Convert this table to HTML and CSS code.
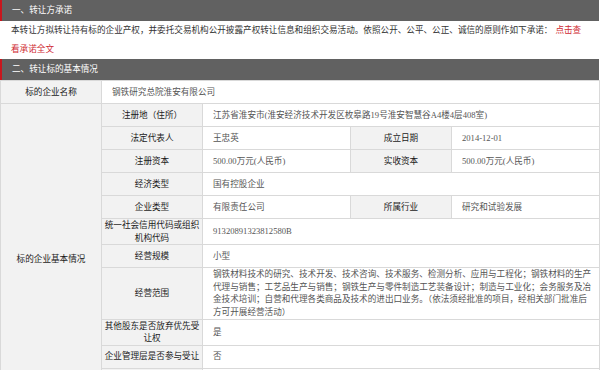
FILE: index.html
```html
<!DOCTYPE html>
<html lang="zh-CN">
<head>
<meta charset="utf-8">
<title>转让标的</title>
<link rel="stylesheet" href="styles.css">
</head>
<body>
<div class="page">
  <div class="sec-title">一、转让方承诺</div>
  <p class="promise">本转让方拟转让持有标的企业产权，并委托交易机构公开披露产权转让信息和组织交易活动。依照公开、公平、公正、诚信的原则作如下承诺：<a class="link" href="#">点击查看承诺全文</a></p>
  <div class="sec-title">二、转让标的基本情况</div>
  <table class="info">
    <colgroup>
      <col class="c1"><col class="c2"><col class="c3"><col class="c4"><col class="c5">
    </colgroup>
    <tbody>
      <tr>
        <th class="lbl">标的企业名称</th>
        <td class="val" colspan="4">钢铁研究总院淮安有限公司</td>
      </tr>
      <tr>
        <th class="lbl" rowspan="13">标的企业基本情况</th>
        <th class="lbl">注册地（住所）</th>
        <td class="val" colspan="3">江苏省淮安市(淮安经济技术开发区枚皋路19号淮安智慧谷A4楼4层408室)</td>
      </tr>
      <tr>
        <th class="lbl">法定代表人</th>
        <td class="val">王忠英</td>
        <th class="lbl">成立日期</th>
        <td class="val">2014-12-01</td>
      </tr>
      <tr>
        <th class="lbl">注册资本</th>
        <td class="val">500.00万元(人民币)</td>
        <th class="lbl">实收资本</th>
        <td class="val">500.00万元(人民币)</td>
      </tr>
      <tr>
        <th class="lbl">经济类型</th>
        <td class="val" colspan="3">国有控股企业</td>
      </tr>
      <tr>
        <th class="lbl">企业类型</th>
        <td class="val">有限责任公司</td>
        <th class="lbl">所属行业</th>
        <td class="val">研究和试验发展</td>
      </tr>
      <tr>
        <th class="lbl">统一社会信用代码或组织机构代码</th>
        <td class="val" colspan="3">91320891323812580B</td>
      </tr>
      <tr>
        <th class="lbl">经营规模</th>
        <td class="val" colspan="3">小型</td>
      </tr>
      <tr>
        <th class="lbl">经营范围</th>
        <td class="val" colspan="3">钢铁材料技术的研究、技术开发、技术咨询、技术服务、检测分析、应用与工程化；钢铁材料的生产代理与销售；工艺品生产与销售；钢铁生产与零件制造工艺装备设计；制造与工业化；会务服务及冶金技术培训；自营和代理各类商品及技术的进出口业务。（依法须经批准的项目，经相关部门批准后方可开展经营活动）</td>
      </tr>
      <tr>
        <th class="lbl">其他股东是否放弃优先受让权</th>
        <td class="val" colspan="3">是</td>
      </tr>
      <tr>
        <th class="lbl">企业管理层是否参与受让</th>
        <td class="val" colspan="3">否</td>
      </tr>
      <tr>
        <th class="lbl">职工人数</th>
        <td class="val" colspan="3">12</td>
      </tr>
      <tr>
        <th class="lbl">是否含有国有划拨土地</th>
        <td class="val" colspan="3">否</td>
      </tr>
    </tbody>
  </table>
</div>
</body>
</html>
```

FILE: styles.css
```css
html, body {
  margin: 0;
  padding: 0;
  background: #ffffff;
  overflow: hidden;
}

.page {
  width: 599px;
  font-family: "Liberation Serif", "Noto Sans CJK SC", serif;
  font-size: 8.6px;
  color: #333333;
}

.sec-title {
  height: 21px;
  line-height: 21px;
  background: #616161;
  border-left: 2px solid #c8161d;
  padding-left: 10px;
  color: #ffffff;
}

.promise {
  margin: 0;
  padding: 0 10px 0 11px;
  line-height: 19px;
  color: #333333;
}

.link {
  color: #cf2a33;
  text-decoration: none;
  margin-left: 3px;
}

.info {
  width: 599px;
  table-layout: fixed;
  border-collapse: collapse;
}

.c1, .c2, .c4 { width: 101px; }
.c3, .c5 { width: 148px; }

.info th,
.info td {
  border: 1px solid #d9d9d9;
  height: 22px;
  line-height: 12.6px;
  padding: 0;
  vertical-align: middle;
}

.lbl {
  background: #f2f2f2;
  color: #1a1a1a;
  font-weight: normal;
  text-align: center;
}

.info th.lbl { padding: 0 2px; }

.val {
  background: #ffffff;
  color: #555555;
  text-align: left;
}

.info td.val { padding: 0 5px 0 10px; }
```
